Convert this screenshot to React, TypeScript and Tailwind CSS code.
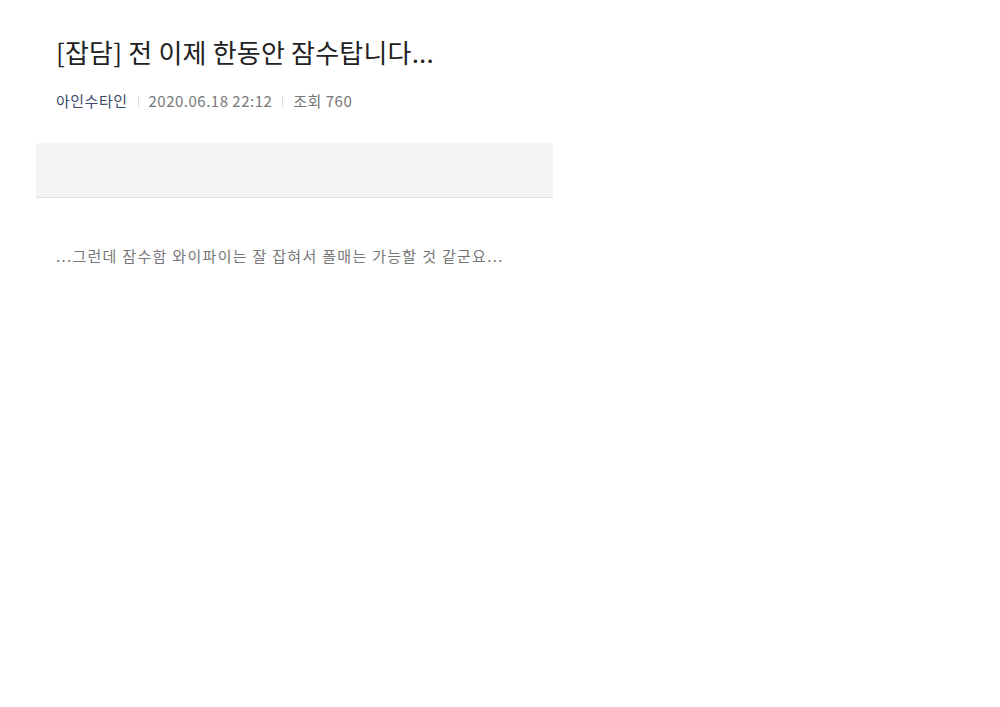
export default function App() {
  return (
    <div className="min-h-[707px] bg-white" style={{ fontFamily: '"Noto Sans CJK KR", "Noto Sans", sans-serif' }}>
      <div className="ml-[36px] w-[517px]">
        <div className="px-5 pt-[32px]">
          <h1 className="text-[26px] leading-[40px] text-[#222] font-normal tracking-[0.2px]">[잡담] 전 이제 한동안 잠수탑니다...</h1>
          <div className="mt-[18px] flex items-center text-[15px] leading-[22px] text-[#777] tracking-[0.5px]">
            <span className="text-[#3b4a6b]">아인수타인</span>
            <span className="mx-[10px] h-[11px] w-px bg-[#ddd]" />
            <span>2020.06.18 22:12</span>
            <span className="mx-[10px] h-[11px] w-px bg-[#ddd]" />
            <span>조회 760</span>
          </div>
        </div>
        <div className="mt-[31px] h-[55px] bg-[#f5f5f5] border-b border-[#e2e2e2]" />
        <div className="px-5 pt-[46px] text-[15px] leading-[24px] text-[#777] tracking-[1.3px]">
          ...그런데 잠수함 와이파이는 잘 잡혀서 폴매는 가능할 것 같군요...
        </div>
      </div>
    </div>
  );
}
